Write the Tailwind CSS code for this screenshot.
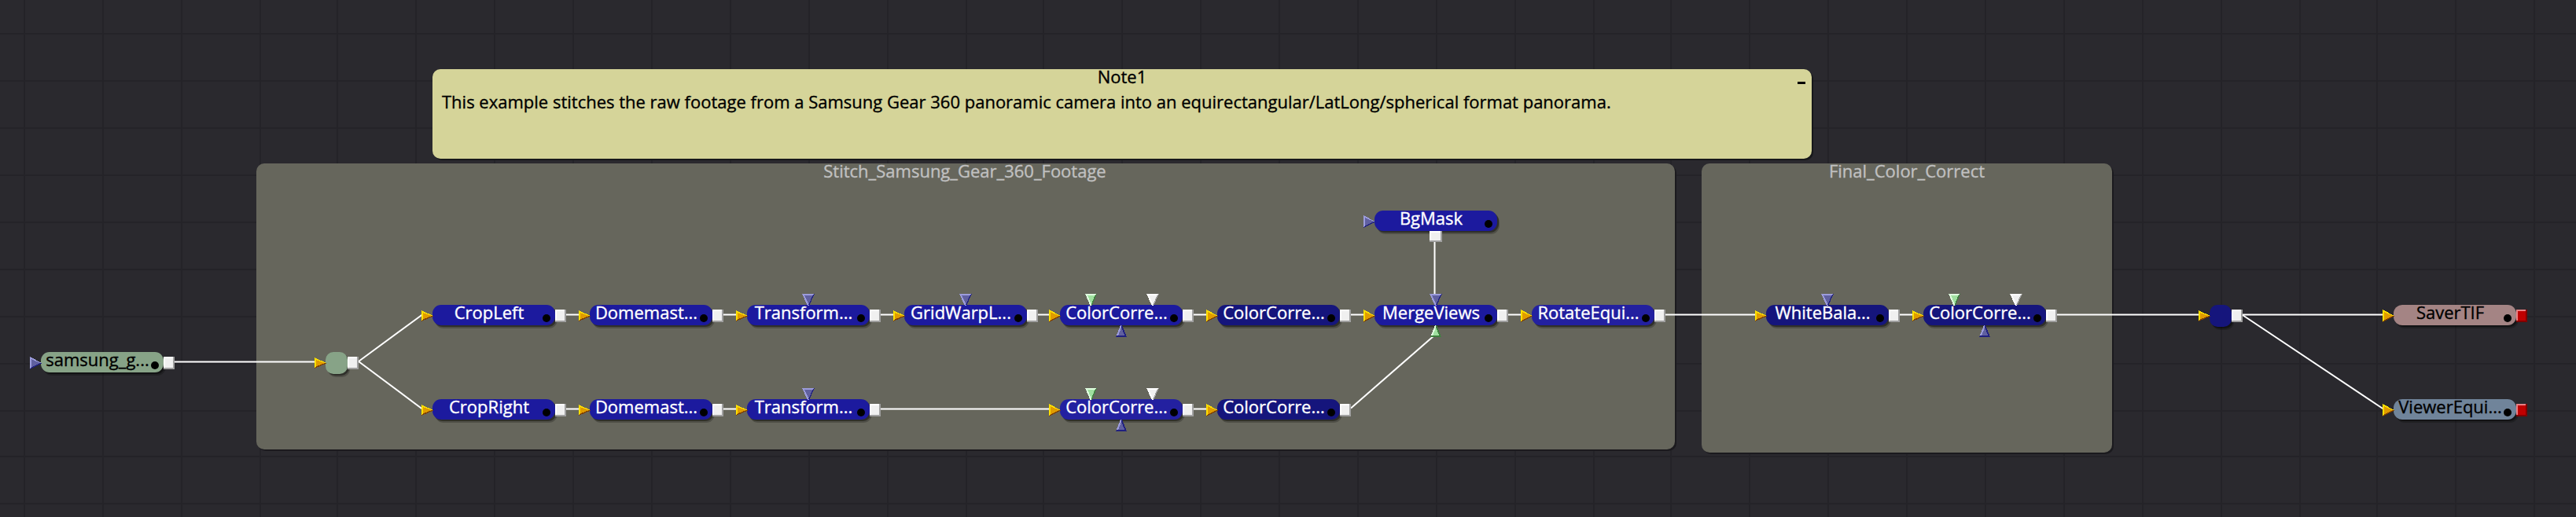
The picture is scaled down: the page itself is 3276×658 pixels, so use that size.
<!DOCTYPE html>
<html lang="en">
<head>
<meta charset="utf-8">
<title>Flow</title>
<script src="https://cdn.jsdelivr.net/npm/@tailwindcss/browser@4"></script>
</head>
<body class="bg-[#2a292e] overflow-hidden">
<main id="canvas" class="relative w-[3276px] h-[658px] overflow-hidden bg-[#2a292e] font-['Open_Sans',sans-serif] text-[22px] leading-[30px] [-webkit-text-stroke:0.35px_currentColor]">
  <svg id="grid" class="absolute inset-0" width="3276" height="658" shape-rendering="crispEdges" fill="#242328"></svg>

  <section class="absolute left-[326px] top-[208px] w-[1804px] h-[364px] rounded-[10px] bg-[#66665c] shadow-[2px_2px_0_#1b1a1e] flex justify-center">
    <h2 class="-mt-[6px] h-[30px] pr-[2px] text-[#c0c0c0] whitespace-nowrap">Stitch_Samsung_Gear_360_Footage</h2>
  </section>
  <section class="absolute left-[2164px] top-[208px] w-[522px] h-[368px] rounded-[10px] bg-[#66665c] shadow-[2px_2px_0_#1b1a1e] flex justify-center">
    <h2 class="-mt-[6px] h-[30px] text-[#c0c0c0] whitespace-nowrap">Final_Color_Correct</h2>
  </section>
  <section class="absolute left-[550px] top-[88px] w-[1754px] h-[114px] rounded-[10px] bg-[#d5d499] shadow-[2px_2px_0_#17181a] text-black">
    <h2 class="-mt-[6px] h-[30px] text-center">Note1</h2>
    <p class="mt-[2px] pl-[12px] whitespace-nowrap">This example stitches the raw footage from a Samsung Gear 360 panoramic camera into an equirectangular/LatLong/spherical format panorama.</p>
    <span class="absolute right-[8px] top-[16px] w-[10px] h-[3px] bg-black"></span>
  </section>

  <svg class="absolute inset-0" width="3276" height="658" fill="none" stroke="#fff" stroke-width="2">
    <path d="M222 460.5H402M456 460L537 400.5M456 460L537 520.5"/>
    <path d="M720 400.5H737M920 400.5H937M1120 400.5H1137M1320 400.5H1335M1518 400.5H1535M1718 400.5H1735M1918 400.5H1935M2118 400.5H2233M2416 400.5H2433M2616 400.5H2797M2852 400.5H3031"/>
    <path d="M720 520.5H737M920 520.5H937M1120 520.5H1335M1518 520.5H1535M1718 519.5L1824 427M1824.5 308V375M2852 401L3031 520.5"/>
  </svg>
  <svg id="pins" class="absolute inset-0 z-10" width="3276" height="658" shape-rendering="crispEdges"></svg>
</main>

<template id="node">
  <div class="absolute flex h-[26px] w-[156px] rounded-[11px] shadow-[2px_2px_0_rgba(0,0,0,0.4),3px_4px_0_rgba(0,0,0,0.22)]">
    <span class="-mt-[6px] h-[30px] w-[144px] text-center whitespace-nowrap"></span>
    <i class="absolute right-[6px] top-[12px] size-[10px] rounded-full bg-black"></i>
  </div>
</template>
<template id="router">
  <div class="absolute size-[28px] rounded-[10px] shadow-[2px_2px_0_rgba(0,0,0,0.4),3px_4px_0_rgba(0,0,0,0.22)]"></div>
</template>

<script>
const canvas = document.getElementById('canvas');
const pins = document.getElementById('pins');
let grid = '';
for (let k = 0; k < 33; k++) {
  const x = 30 + 100 * k - (k > 3 ? 2 : 0) - (k > 12 ? 2 : 0) - (k > 20 ? 2 : 0) - (k > 29 ? 2 : 0);
  grid += `<rect x="${x}" y="0" width="2" height="658"/>`;
}
for (let k = 0; k < 11; k++) grid += `<rect x="0" y="${42 + 60 * k - (k > 8 ? 2 : 0)}" width="3276" height="2"/>`;
document.getElementById('grid').innerHTML = grid;

// light edge, face, dark edge
const tones = {
  yellow: ['#ffe000', '#e09c00', '#804000'],
  blue: ['#9c9cdc', '#6060a0', '#202080'],
  green: ['#e0ffe0', '#a0e0a0', '#408040'],
  white: ['#ffffff', '#f0f0f0', '#a0a0a0'],
  red: ['#e88084', '#c00000', '#800000'],
};
let art = '';
const poly = (pts, fill) => { art += `<polygon points="${pts}" fill="${fill}"/>`; };
function right(x, y, h, tone) {
  const [l, f, d] = tones[tone], m = y + h / 2, b = y + h;
  poly(`${x},${y} ${x + 15},${m} ${x},${b}`, l);
  poly(`${x},${b} ${x + 15},${m + .5} ${x + 15},${m - .5} ${x + 11},${m} ${x + 2},${b - 3}`, d);
  poly(`${x + 2},${y + 3} ${x + 13},${m} ${x + 2},${b - 2.5}`, f);
}
function down(x, y, w, tone) {
  const [l, f, d] = tones[tone], m = x + w / 2, r = x + w;
  poly(`${x},${y} ${r},${y} ${m + 1},${y + 15} ${m - 1},${y + 15}`, l);
  poly(`${r},${y} ${m + 1},${y + 15} ${m},${y + 12} ${r - 2.5},${y + 2}`, d);
  poly(`${x + 3},${y + 2} ${r - 2.5},${y + 2} ${m + .5},${y + 13}`, f);
}
function up(x, y, w, tone) {
  const [l, f, d] = tones[tone], m = x + w / 2, r = x + w, b = y + 15;
  poly(`${x},${b} ${r},${b} ${m + 1},${y} ${m - 1},${y}`, l);
  poly(`${x},${b} ${x + 1},${b - 2} ${r - 3},${b - 2} ${m},${y + 3} ${m},${y} ${m + 1},${y} ${r},${b}`, d);
  poly(`${x + 3},${b - 2} ${r - 2.5},${b - 2} ${m},${y + 3}`, f);
}
function square(x, y, w, h, tone) {
  const [l, f, d] = tones[tone];
  art += `<rect x="${x}" y="${y}" width="${w}" height="${h}" fill="${d}"/><rect x="${x}" y="${y}" width="${w - 2}" height="${h - 2}" fill="${l}"/><rect x="${x + 2}" y="${y + 2}" width="${w - 4}" height="${h - 4}" fill="${f}"/>`;
}

const B = '#1c1a9e', N = '#15157c', V = '#2320a0', W = '#ffffff', K = '#000000';
// label, x, y, fill, text, input height, input tone, extra pins
const nodes = [
  ['samsung_g...', 52, 448, '#87a387', K, 16, 'blue', ''],
  ['CropLeft', 550, 388, B, W, 14, 'yellow', ''],
  ['Domemast...', 750, 388, B, W, 14, 'yellow', ''],
  ['Transform...', 950, 388, B, W, 14, 'yellow', 't'],
  ['GridWarpL...', 1150, 388, B, W, 14, 'yellow', 't'],
  ['ColorCorre...', 1348, 388, B, W, 16, 'yellow', 'c'],
  ['ColorCorre...', 1548, 388, N, W, 16, 'yellow', ''],
  ['MergeViews', 1748, 388, B, W, 16, 'yellow', 'tg'],
  ['RotateEqui...', 1948, 388, V, W, 16, 'yellow', ''],
  ['BgMask', 1748, 268, B, W, 16, 'blue', 'b'],
  ['CropRight', 550, 508, B, W, 14, 'yellow', ''],
  ['Domemast...', 750, 508, B, W, 14, 'yellow', ''],
  ['Transform...', 950, 508, B, W, 14, 'yellow', 't'],
  ['ColorCorre...', 1348, 508, V, W, 16, 'yellow', 'c'],
  ['ColorCorre...', 1548, 508, N, W, 16, 'yellow', ''],
  ['WhiteBala...', 2246, 388, N, W, 14, 'yellow', 't'],
  ['ColorCorre...', 2446, 388, N, W, 14, 'yellow', 'c'],
  ['SaverTIF', 3044, 388, '#a48484', K, 16, 'yellow', 'r'],
  ['ViewerEqui...', 3044, 508, '#70849a', K, 16, 'yellow', 'r'],
];
function place(id, x, y, fill) {
  const el = document.getElementById(id).content.firstElementChild.cloneNode(true);
  el.style.left = x + 'px'; el.style.top = y + 'px'; el.style.backgroundColor = fill;
  canvas.insertBefore(el, pins);
  return el;
}
for (const [label, x, y, fill, ink, h, tone, extra] of nodes) {
  const el = place('node', x, y, fill);
  el.style.color = ink;
  el.querySelector('span').textContent = label;
  right(x - 14, y + 14 - h / 2, h, tone);
  if (extra.includes('b')) square(x + 70, y + 26, 16, 14, 'white');
  else square(x + 156, y + 6, 14, 16, extra.includes('r') ? 'red' : 'white');
  if (extra.includes('t')) down(x + 70, y - 14, 16, 'blue');
  if (extra.includes('g')) up(x + 71, y + 26, 14, 'green');
  if (extra.includes('c')) {
    down(x + 32, y - 14, 15, 'green');
    down(x + 110, y - 14, 16, 'white');
    up(x + 71, y + 26, 14, 'blue');
  }
}
for (const [x, y, fill] of [[414, 448, '#87a387'], [2810, 388, N]]) {
  place('router', x, y, fill);
  right(x - 14, y + 7, 14, 'yellow');
  square(x + 28, y + 6, 14, 16, 'white');
}
pins.innerHTML = art;
</script>
</body>
</html>
